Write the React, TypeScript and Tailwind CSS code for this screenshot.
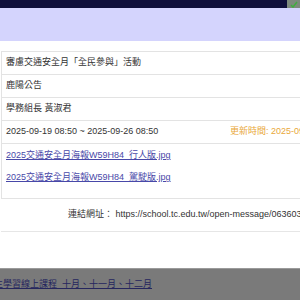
import React from 'react';

const rows = ['審慮交通安全月「全民參與」活動', '鹿陽公告', '學務組長 黃淑君'];

const files = ['2025交通安全月海報W59H84_行人版.jpg', '2025交通安全月海報W59H84_駕駛版.jpg'];

const App = () => {
  return (
    <div className="w-[300px] h-[300px] overflow-hidden bg-white text-[9px] text-[#333] font-['Liberation_Sans','Noto_Sans_CJK_TC',sans-serif]">
      <div className="h-[8px] bg-[#0f0f3b] flex justify-end">
        <div className="w-[13px] h-[8px] bg-[#7d8a7d] flex items-center justify-center">
          <svg width="8" height="7" viewBox="0 0 8 7">
            <path d="M1 4 L3 6 L7 1" stroke="#3fae3f" strokeWidth="1.5" fill="none" />
          </svg>
        </div>
      </div>
      <div className="h-[33px] bg-[#d4d4fd]" />

      <div className="w-[420px] bg-white pt-[10px] pl-[1px]">
        <div className="border border-[#e3e3e3]">
          {rows.map((r) => (
            <div key={r} className="h-[23px] flex items-center pl-[4px] border-b border-[#e3e3e3]">
              {r}
            </div>
          ))}
          <div className="h-[23px] flex items-center pl-[4px] border-b border-[#e3e3e3]">
            <span className="w-[224px]">2025-09-19 08:50 ~ 2025-09-26 08:50</span>
            <span className="text-[#e9a83a]">更新時間: 2025-09-26 08:50</span>
          </div>
          <div className="pt-[1px] pb-[9px] pl-[4px]">
            {files.map((f) => (
              <div key={f} className="h-[22px] flex items-center">
                <a className="text-[#4848a8] underline">{f}</a>
              </div>
            ))}
          </div>
        </div>
        <div className="h-[33px] flex items-center pl-[67px] border-b border-[#e6e6e6]">
          連結網址： https://school.tc.edu.tw/open-message/063603
        </div>
        <div className="h-[36px]" />
      </div>

      <div className="h-[33px] bg-[#7a7a7a] border-t border-[#9a9a9a] flex items-center">
        <span className="ml-[-15px] text-[#26265e] underline">自主學習線上課程_十月、十一月、十二月</span>
      </div>
    </div>
  );
};

export default App;
